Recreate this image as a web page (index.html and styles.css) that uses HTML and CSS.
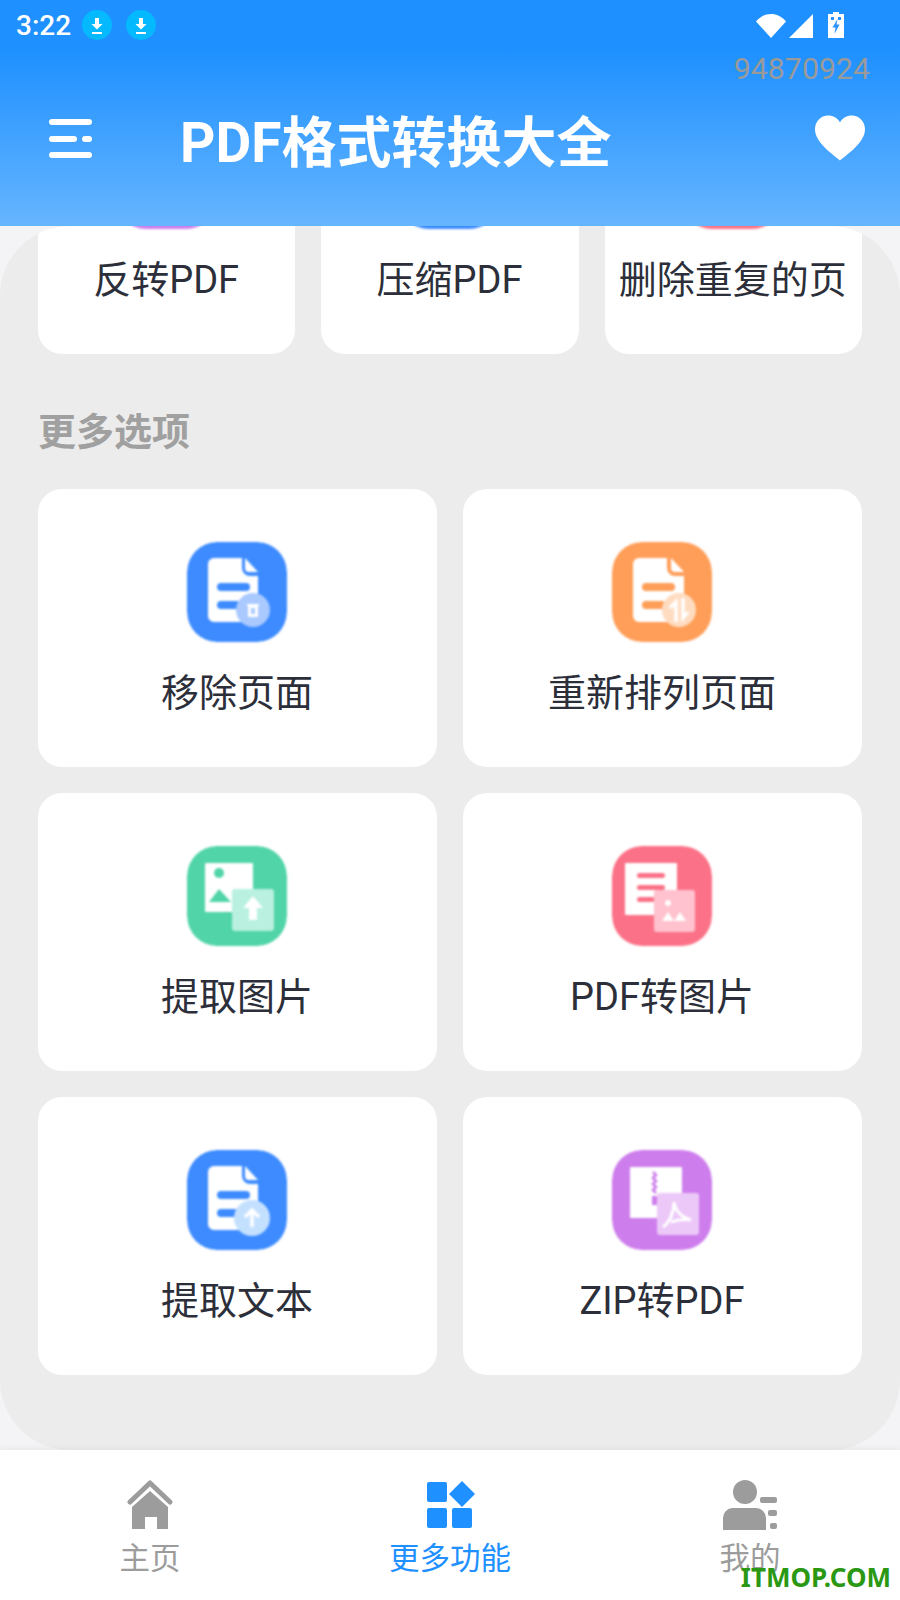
FILE: index.html
```html
<!DOCTYPE HTML>
<html>
<head>
  <meta charset="UTF-8">
  <title>PDF格式转换大全</title>
  <link rel="stylesheet" href="styles.css">
</head>
<body>

  <div class="page">
    <header class="header">
      <div class="status">
        <span class="time">3:22</span>
        <svg class="dl" viewBox="0 0 30 30"><circle cx="15" cy="15" r="15" fill="#05b9ff"/><path d="M13 8h4v6h3.500L15 19.500 9.500 14H13zM10 22h10v2H10z" fill="#fff"/></svg>
        <svg class="dl" viewBox="0 0 30 30"><circle cx="15" cy="15" r="15" fill="#05b9ff"/><path d="M13 8h4v6h3.500L15 19.500 9.500 14H13zM10 22h10v2H10z" fill="#fff"/></svg>
        <span class="status-right">
          <svg class="wifi" viewBox="0 0 30 24"><path d="M0 7.500C8-2.500 22-2.500 30 7.500L15 24z" fill="#fff"/></svg>
          <svg class="signal" viewBox="0 0 24 24"><path d="M24 0v24H0z" fill="#fff"/></svg>
          <svg class="battery" viewBox="0 0 16 26"><path d="M5 0h6v2h5v24H0V2h5z" fill="#fff"/><path d="M3 5h3v3H3zM10 5h3v3h-3z" fill="#2a93ff"/><path d="M9.500 7 4.500 15.500h3l-1 6.500 5-9.500h-3z" fill="#2a93ff"/></svg>
        </span>
      </div>
      <div class="device-id">94870924</div>
      <div class="toolbar">
        <svg class="menu" viewBox="0 0 43 39">
          <rect x="0" y="0" width="43" height="6" rx="3" fill="#fff"/>
          <rect x="0" y="17" width="28" height="6" rx="3" fill="#fff"/>
          <rect x="33" y="17" width="10" height="6" rx="3" fill="#fff"/>
          <rect x="0" y="33" width="43" height="6" rx="3" fill="#fff"/>
        </svg>
        <h1 class="title">PDF格式转换大全</h1>
        <svg class="heart" viewBox="0 0 51 46"><path d="M25.500 46C22 42 0 29 0 14 0 6 6 0 13.500 0c5 0 9.500 2.500 12 7 2.500-4.500 7-7 12-7C45 0 51 6 51 14c0 15-22 28-25.500 32z" fill="#fff"/></svg>
      </div>
    </header>

    <main class="panel">
      <div class="row-three">
        <div class="tile"><div class="tile-art bg-purple"></div><div class="tile-name">反转PDF</div></div>
        <div class="tile"><div class="tile-art bg-blue"></div><div class="tile-name">压缩PDF</div></div>
        <div class="tile"><div class="tile-art bg-red"></div><div class="tile-name">删除重复的页</div></div>
      </div>

      <h2 class="section-title">更多选项</h2>

      <div class="row-two">
        <div class="tile">
          <svg class="tile-art" viewBox="0 0 100 100">
            <rect width="100" height="100" rx="30" fill="#3d8bff"/>
            <path d="M27 16h28v10a8 8 0 0 0 8 8h8v40a6 6 0 0 1-6 6H27a6 6 0 0 1-6-6V22a6 6 0 0 1 6-6zM58 16l13 14h-9a4 4 0 0 1-4-4z" fill="#fff"/>
            <rect x="30" y="41" width="33" height="8" rx="4" fill="#3d8bff"/>
            <rect x="30" y="59" width="24" height="8" rx="4" fill="#3d8bff"/>
            <circle cx="66" cy="68" r="17" fill="#a9c9ff"/>
            <path d="M60 62h12v2h-1v11h-10V64h-1z" fill="#fff"/>
            <rect x="64" y="66" width="4" height="6" fill="#a9c9ff"/>
          </svg>
          <div class="tile-name">移除页面</div>
        </div>
        <div class="tile">
          <svg class="tile-art" viewBox="0 0 100 100">
            <rect width="100" height="100" rx="30" fill="#ff9e58"/>
            <path d="M27 16h28v10a8 8 0 0 0 8 8h9v40a6 6 0 0 1-6 6H27a6 6 0 0 1-6-6V22a6 6 0 0 1 6-6zM59 16l13 14h-9a4 4 0 0 1-4-4z" fill="#fff"/>
            <rect x="30" y="41" width="33" height="8" rx="4" fill="#ff9e58"/>
            <rect x="30" y="59" width="24" height="8" rx="4" fill="#ff9e58"/>
            <circle cx="67" cy="68" r="17" fill="#ffdcc0"/>
            <path d="M64 80V60l-6 6M71 56v20l5-6" fill="none" stroke="#fff" stroke-width="3.500"/>
          </svg>
          <div class="tile-name">重新排列页面</div>
        </div>
        <div class="tile">
          <svg class="tile-art" viewBox="0 0 100 100">
            <rect width="100" height="100" rx="30" fill="#50d4a8"/>
            <rect x="18" y="17" width="48" height="49" rx="1" fill="#fff"/>
            <circle cx="32" cy="27" r="5" fill="#50d4a8"/>
            <path d="M32 43 44 56H22z" fill="#50d4a8"/>
            <rect x="45" y="43" width="42" height="42" rx="3" fill="#b9f0df"/>
            <path d="M66 50 76 62H70V74H62V62H56z" fill="#fff"/>
          </svg>
          <div class="tile-name">提取图片</div>
        </div>
        <div class="tile">
          <svg class="tile-art" viewBox="0 0 100 100">
            <rect width="100" height="100" rx="30" fill="#fb7187"/>
            <rect x="13" y="17" width="52" height="52" rx="1" fill="#fff"/>
            <rect x="25" y="27" width="28" height="5" rx="2.500" fill="#fb7187"/>
            <rect x="25" y="39" width="28" height="5" rx="2.500" fill="#fb7187"/>
            <rect x="25" y="51" width="18" height="5" rx="2.500" fill="#fb7187"/>
            <rect x="42" y="44" width="41" height="42" rx="3" fill="#ffc2ce"/>
            <circle cx="56" cy="57" r="3" fill="#fff"/>
            <path d="M50 75 56 66 62 75zM62 75 68 66 74 75z" fill="#fff"/>
          </svg>
          <div class="tile-name">PDF转图片</div>
        </div>
        <div class="tile">
          <svg class="tile-art" viewBox="0 0 100 100">
            <rect width="100" height="100" rx="30" fill="#3d8bff"/>
            <path d="M27 16h28v10a8 8 0 0 0 8 8h8v40a6 6 0 0 1-6 6H27a6 6 0 0 1-6-6V22a6 6 0 0 1 6-6zM58 16l13 14h-9a4 4 0 0 1-4-4z" fill="#fff"/>
            <rect x="30" y="41" width="33" height="8" rx="4" fill="#3d8bff"/>
            <rect x="30" y="59" width="24" height="8" rx="4" fill="#3d8bff"/>
            <circle cx="65" cy="68" r="18" fill="#c4e0ff"/>
            <path d="M65 77V60M58 67l7-7 7 7" fill="none" stroke="#fff" stroke-width="3.500"/>
          </svg>
          <div class="tile-name">提取文本</div>
        </div>
        <div class="tile">
          <svg class="tile-art" viewBox="0 0 100 100">
            <rect width="100" height="100" rx="30" fill="#cd7eec"/>
            <rect x="18" y="17" width="52" height="51" rx="1" fill="#fff"/>
            <path d="M41 22l3 3-3 3 3 3-3 3 3 3-3 3 3 3" fill="none" stroke="#cd7eec" stroke-width="2.500"/>
            <rect x="40" y="46" width="5" height="9" fill="#cd7eec"/>
            <rect x="45" y="43" width="42" height="42" rx="3" fill="#ecc8f8"/>
            <path d="M51 77C58 72 62 62 62 52c1 8 7 15 17 18-6-1-14 0-20 2" fill="none" stroke="#fff" stroke-width="3"/>
          </svg>
          <div class="tile-name">ZIP转PDF</div>
        </div>
      </div>
    </main>

    <nav class="tabbar">
      <div class="tab">
        <svg class="tab-icon" width="50" height="50" viewBox="0 0 50 50">
          <path d="M5 22 25 3l20 19" fill="none" stroke="#9c9c9c" stroke-width="5" stroke-linecap="round" stroke-linejoin="round"/>
          <path d="M25 11 43 27v22H32V37H20v12H7V27z" fill="#9c9c9c"/>
        </svg>
        <span>主页</span>
      </div>
      <div class="tab tab-active">
        <svg class="tab-icon" width="50" height="50" viewBox="0 0 50 50">
          <rect x="2" y="2" width="20" height="20" rx="2" fill="#1e90ff"/>
          <rect x="2" y="28" width="20" height="20" rx="2" fill="#1e90ff"/>
          <rect x="27" y="28" width="20" height="20" rx="2" fill="#1e90ff"/>
          <path d="M37 1 50 14 37 27 24 14z" fill="#1e90ff"/>
        </svg>
        <span>更多功能</span>
      </div>
      <div class="tab">
        <svg class="tab-icon" width="56" height="50" viewBox="0 0 56 50">
          <circle cx="23" cy="12" r="12" fill="#9c9c9c"/>
          <path d="M10 28h24a10 10 0 0 1 10 10v12H1V38a10 10 0 0 1 9-10z" fill="#9c9c9c"/>
          <rect x="38" y="17" width="17" height="6" rx="2" fill="#9c9c9c"/>
          <rect x="46" y="30" width="9" height="6" rx="2" fill="#9c9c9c"/>
          <rect x="48" y="43" width="7" height="6" rx="2" fill="#9c9c9c"/>
        </svg>
        <span>我的</span>
      </div>
      <div class="watermark">ITMOP.COM</div>
    </nav>
  </div>

</body>
</html>
```

FILE: styles.css
```css
* {
  box-sizing: border-box;
}
body {
  margin: 0;
  font-family: Roboto, "Noto Sans CJK SC", sans-serif;
  background-color: #f4f4f6;
}
.page {
  width: 900px;
  height: 1600px;
  display: flex;
  flex-direction: column;
  overflow: hidden;
}

/* header */
.header {
  height: 226px;
  flex: none;
  background: linear-gradient(#1e90ff 22%, #66b5ff 100%);
  position: relative;
  z-index: 1;
}
.status {
  height: 50px;
  padding: 0 56px 0 16px;
  display: flex;
  align-items: center;
  gap: 14px;
}
.time {
  font-size: 28px;
  font-weight: 500;
  color: #fff;
  margin-right: -3px;
}
.dl {
  width: 30px;
  height: 30px;
}
.status-right {
  margin-left: auto;
  display: flex;
  align-items: flex-end;
  height: 26px;
}
.wifi {
  width: 30px;
  height: 24px;
  margin-right: 3px;
}
.signal {
  width: 24px;
  height: 24px;
  margin-right: 15px;
}
.battery {
  width: 16px;
  height: 26px;
}
.device-id {
  height: 37px;
  line-height: 37px;
  padding-right: 30px;
  text-align: right;
  font-size: 30.3px;
  color: #9a9a9a;
}
.toolbar {
  height: 102px;
  padding: 0 35px 0 49px;
  display: flex;
  align-items: center;
}
.menu {
  width: 43px;
  height: 39px;
}
.title {
  margin: 0 0 0 88px;
  font-size: 55px;
  font-weight: 700;
  color: #fff;
}
.heart {
  width: 50px;
  height: 46px;
  margin-left: auto;
}

/* content panel */
.panel {
  flex: 1;
  min-height: 0;
  padding: 0 38px;
  background-color: #ececec;
  border-radius: 70px;
  overflow: hidden;
}
.row-three {
  margin-top: -150px;
  display: grid;
  grid-template-columns: repeat(3, 1fr);
  gap: 26px;
}
.row-two {
  display: grid;
  grid-template-columns: repeat(2, 1fr);
  gap: 26px;
}
.section-title {
  margin: 56px 0 35px;
  line-height: 44px;
  font-size: 38px;
  font-weight: 700;
  color: #a0a0a0;
}
.tile {
  height: 278px;
  padding-top: 53px;
  background-color: #fff;
  border-radius: 24px;
  display: flex;
  flex-direction: column;
  align-items: center;
}
.tile-art {
  width: 100px;
  height: 100px;
  flex: none;
  margin-right: 2px;
  border-radius: 30px;
  filter: blur(0.8px);
}
.tile-name {
  margin-top: 31px;
  margin-right: 1px;
  line-height: 40px;
  font-size: 38px;
  color: #2c2f3a;
  white-space: nowrap;
}
.bg-purple {
  background-color: #cd7eec;
}
.bg-blue {
  background-color: #3d8bff;
}
.bg-red {
  background-color: #fb7187;
}

/* bottom tabs */
.tabbar {
  height: 150px;
  flex: none;
  padding-top: 30px;
  background-color: #fff;
  box-shadow: 0 -2px 6px rgba(0, 0, 0, 0.05);
  display: grid;
  grid-template-columns: repeat(3, 1fr);
  position: relative;
}
.tab {
  display: flex;
  flex-direction: column;
  align-items: center;
  gap: 12px;
  font-size: 30.5px;
  line-height: 34px;
  color: #9c9c9c;
}
.tab-icon {
  flex: none;
}
.tab-active {
  color: #1e90ff;
}
.watermark {
  position: absolute;
  right: 9px;
  bottom: 10px;
  font-family: "Noto Sans", sans-serif;
  font-size: 26px;
  line-height: 26px;
  font-weight: 700;
  color: #2a9812;
}
```
